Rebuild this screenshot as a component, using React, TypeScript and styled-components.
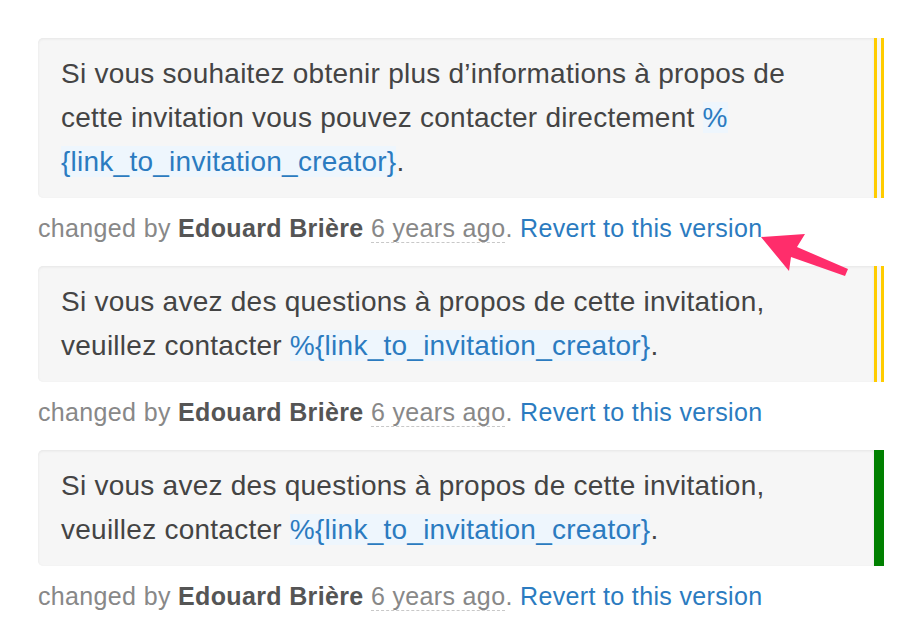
import React from 'react';
import styled, {createGlobalStyle} from 'styled-components';

const GlobalStyle = createGlobalStyle`
  html, body {
    margin: 0;
    padding: 0;
    background: #fff;
  }
  body {
    font-family: "Liberation Sans", Arial, sans-serif;
    -webkit-font-smoothing: antialiased;
  }
`;

type Marker = 'changed' | 'current';

type Version = {
    key: string,
    marker: Marker,
    lines: React.ReactNode,
};

const Page = styled.div`
  position: relative;
  width: 910px;
  height: 628px;
  padding: 38px 26px 0 38px;
  box-sizing: border-box;
`;

const VersionBox = styled.div<{ $marker: Marker }>`
  background: #f6f6f6;
  border-radius: 5px 0 0 5px;
  box-shadow: inset 0 1px 3px rgba(0, 0, 0, 0.07);
  border-right: ${({$marker}) => ($marker === 'current' ? '10px solid #008000' : '10px double #ffcc00')};
  padding: 14px 40px 14px 23px;
  font-size: 28px;
  letter-spacing: 0.25px;
  line-height: 44px;
  color: #444;
`;

const Placeholder = styled.span`
  color: #2b7bc0;
  background: #eef6fd;
`;

const Meta = styled.div`
  margin: 12px 0 20px;
  font-size: 25px;
  letter-spacing: 0.35px;
  line-height: 36px;
  color: #888;
`;

const Author = styled.strong`
  color: #555;
  font-weight: bold;
`;

const Ago = styled.span`
  border-bottom: 1px dashed #c8c8c8;
`;

const RevertLink = styled.a`
  color: #2b7bc0;
  text-decoration: none;
  cursor: pointer;
`;

const Arrow = styled.svg`
  position: absolute;
  left: 0;
  top: 0;
  pointer-events: none;
`;

const placeholder = (
    <Placeholder>%<wbr/>{'{link_to_invitation_creator}'}</Placeholder>
);

const versions: Version[] = [
    {
        key: 'v3',
        marker: 'changed',
        lines: <>Si vous souhaitez obtenir plus d’informations à propos de cette invitation vous pouvez contacter directement {placeholder}.</>,
    },
    {
        key: 'v2',
        marker: 'changed',
        lines: <>Si vous avez des questions à propos de cette invitation, veuillez contacter {placeholder}.</>,
    },
    {
        key: 'v1',
        marker: 'current',
        lines: <>Si vous avez des questions à propos de cette invitation, veuillez contacter {placeholder}.</>,
    },
];

export default function App(): React.ReactElement {
    return (
        <Page>
            <GlobalStyle/>
            {versions.map((version) => (
                <div key={version.key}>
                    <VersionBox $marker={version.marker}>{version.lines}</VersionBox>
                    <Meta>
                        changed by <Author>Edouard Brière</Author> <Ago title={'2018'}>6 years ago</Ago>.{' '}
                        <RevertLink>Revert to this version</RevertLink>
                    </Meta>
                </div>
            ))}
            <Arrow width={910} height={628} viewBox={'0 0 910 628'}>
                <polygon
                    points={'761,237 805,234 797,247 848,269 845,276 791,257 789,271'}
                    fill={'#ff2d6b'}
                />
            </Arrow>
        </Page>
    );
}
